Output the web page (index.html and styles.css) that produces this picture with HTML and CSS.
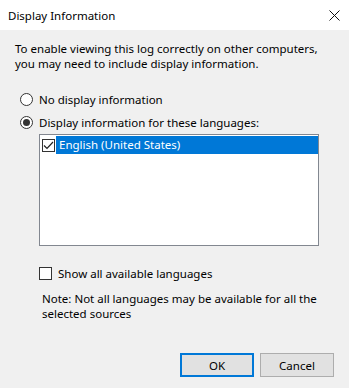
FILE: index.html
```html
<!DOCTYPE html>
<html lang="en">
    <head>
        <meta charset="UTF-8">
        <title>Display Information</title>
        <link rel="stylesheet" href="styles.css">
    </head>
    <body>
        <div class="dialog">
            <div class="titlebar">
                <span class="title">Display Information</span>
                <svg class="close" width="11" height="11" viewBox="0 0 11 11">
                    <path d="M0.5 0.5 L10.5 10.5 M10.5 0.5 L0.5 10.5" stroke="#111" stroke-width="1" fill="none"/>
                </svg>
            </div>

            <div class="content">
                <p class="intro">To enable viewing this log correctly on other computers,<br>you may need to include display information.</p>

                <div class="option">
                    <span class="radio"></span>
                    <span>No display information</span>
                </div>
                <div class="option">
                    <span class="radio checked"></span>
                    <span>Display information for these languages:</span>
                </div>

                <div class="listbox">
                    <div class="listItem">
                        <span class="check checked">
                            <svg width="11" height="11" viewBox="0 0 11 11">
                                <path d="M1 5.5 L4 8.5 L10 2" stroke="#222" stroke-width="1.2" fill="none"/>
                            </svg>
                        </span>
                        <span class="itemLabel">English (United States)</span>
                    </div>
                </div>

                <div class="showAll">
                    <span class="check"></span>
                    <span>Show all available languages</span>
                </div>

                <p class="note">Note: Not all languages may be available for all the<br>selected sources</p>

                <div class="buttons">
                    <button class="btn default">OK</button>
                    <button class="btn">Cancel</button>
                </div>
            </div>
        </div>
    </body>
</html>
```

FILE: styles.css
```css
body {
    margin: 0;
    font-family: "Noto Sans", "Open Sans", sans-serif;
    font-size: 11.5px;
    color: #000;
    background-color: #f0f0f0;
}

.dialog {
    width: 349px;
    height: 388px;
    background-color: #f0f0f0;
}

.titlebar {
    height: 30px;
    background-color: #fff;
    display: flex;
    align-items: center;
    justify-content: space-between;
    padding: 0 9px 0 8px;
    box-sizing: border-box;
}

.close {
    display: block;
}

.content {
    padding: 11px 15px 0 15px;
}

.intro {
    margin: 0;
    line-height: 15px;
}

.option {
    display: flex;
    align-items: center;
    height: 17px;
    margin-left: 5px;
    gap: 6px;
}

.intro + .option {
    margin-top: 20px;
}

.option + .option {
    margin-top: 6px;
}

.radio {
    width: 11px;
    height: 11px;
    border: 1px solid #333;
    border-radius: 50%;
    background-color: #fff;
    position: relative;
}

.radio.checked::after {
    content: "";
    position: absolute;
    left: 2px;
    top: 2px;
    width: 7px;
    height: 7px;
    border-radius: 50%;
    background-color: #333;
}

.listbox {
    margin: 3px 0 0 24px;
    width: 280px;
    height: 112px;
    box-sizing: border-box;
    border: 1px solid #828790;
    background-color: #fff;
    padding: 1px 0 0 2px;
}

.listItem {
    display: flex;
    align-items: center;
    height: 18px;
}

.check {
    width: 11px;
    height: 11px;
    border: 1px solid #333;
    background-color: #fff;
    display: flex;
    align-items: center;
    justify-content: center;
}

.itemLabel {
    flex: 1;
    height: 18px;
    line-height: 18px;
    background-color: #0078d7;
    color: #fff;
    margin-left: 1px;
    padding-left: 3px;
}

.showAll {
    display: flex;
    align-items: center;
    gap: 6px;
    height: 16px;
    margin: 19px 0 0 24px;
}

.note {
    margin: 10px 0 0 27px;
    line-height: 15px;
}

.buttons {
    display: flex;
    justify-content: flex-end;
    gap: 6px;
    margin-top: 32px;
}

.btn {
    width: 74px;
    height: 24px;
    box-sizing: border-box;
    border: 1px solid #adadad;
    background-color: #e1e1e1;
    font-family: inherit;
    font-size: 11.5px;
    color: #000;
    padding: 0;
}

.btn.default {
    border: 2px solid #0078d7;
}
```
